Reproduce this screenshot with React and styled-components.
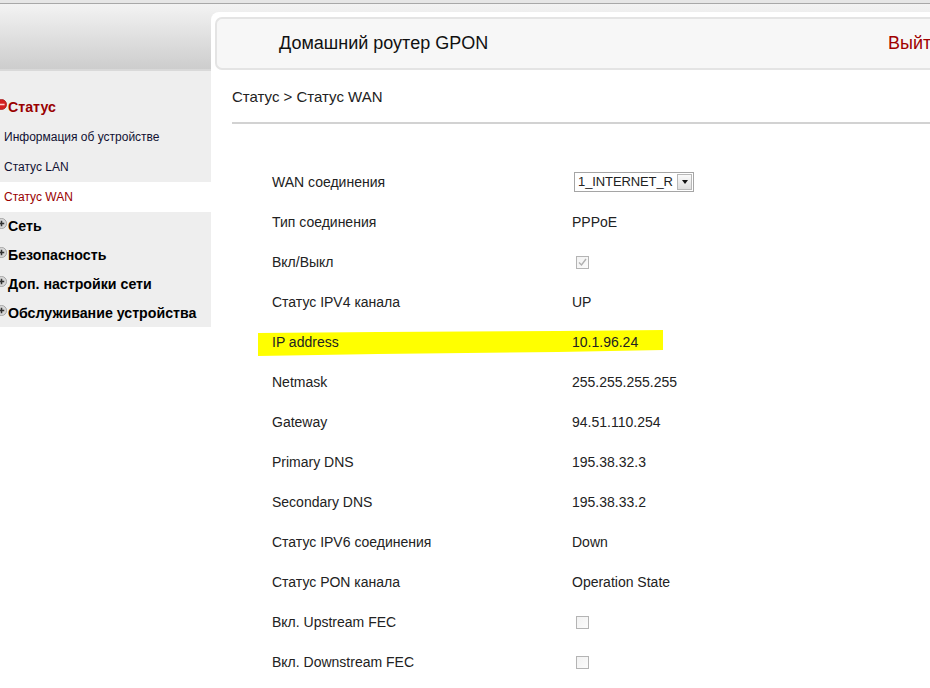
import React from 'react';
import styled, { createGlobalStyle } from 'styled-components';

const GlobalStyle = createGlobalStyle`
  html, body {
    margin: 0;
    padding: 0;
    background: #ffffff;
  }
  body {
    font-family: 'Liberation Sans', Arial, sans-serif;
    color: #111;
  }
`;

const Page = styled.div`
  width: 930px;
  height: 688px;
  overflow: hidden;
  display: grid;
  grid-template-columns: 211px 1fr;
  border-top: 3px solid #e6e6e6;
  background:
    linear-gradient(#a8a8a8, #a8a8a8) 0 0 / 100% 1px no-repeat,
    linear-gradient(#f3f3f3, #cdcdcd) 0 1px / 100% 65px no-repeat,
    linear-gradient(#d9d9d9, #d9d9d9) 0 66px / 100% 2px no-repeat,
    #ffffff;
`;

const Sidebar = styled.nav`
  margin-top: 68px;
  align-self: start;
  background: #eeeeee;
  padding: 21px 0 0;
  height: 235px;
  display: flex;
  flex-direction: column;
`;

const Group = styled.div`
  display: flex;
  align-items: center;
  height: 29px;
  font-size: 14.2px;
  font-weight: bold;
  color: ${p => (p.active ? '#990000' : '#000')};
  &:first-child {
    height: 30px;
  }
`;

const Bullet = styled.svg`
  width: 11px;
  height: 11px;
  margin-left: -4px;
  margin-right: 1px;
  flex: none;
  margin-top: -4px;
`;

const SubItem = styled.div`
  display: flex;
  align-items: center;
  height: 30px;
  padding-left: 4px;
  font-size: 12px;
  background: ${p => (p.active ? '#ffffff' : 'transparent')};
  color: ${p => (p.active ? '#990000' : '#111133')};
`;

const Main = styled.main`
  margin-top: 9px;
  background: #ffffff;
  border-top-left-radius: 8px;
  padding: 5px 0 0 4px;
  display: flex;
  flex-direction: column;
`;

const Header = styled.header`
  height: 49px;
  background: #f7f7f7;
  border: 2px solid #e4e4e4;
  border-right: none;
  border-top-left-radius: 7px;
  border-bottom-left-radius: 7px;
  display: flex;
  align-items: center;
  justify-content: space-between;
  padding-left: 62px;
  margin-right: -40px;
`;

const Title = styled.h1`
  margin: 0;
  font-size: 18px;
  font-weight: normal;
  color: #111;
`;

const Logout = styled.a`
  font-size: 18px;
  color: #a00000;
  width: 82px;
  white-space: nowrap;
`;

const Crumbs = styled.div`
  margin-left: 17px;
  padding-top: 18px;
  height: 34px;
  font-size: 15px;
  color: #222;
  border-bottom: 2px solid #d2d2d2;
`;

const Table = styled.div`
  padding: 38px 0 0 57px;
  display: flex;
  flex-direction: column;
`;

const Row = styled.div`
  position: relative;
  display: grid;
  grid-template-columns: 300px 1fr;
  align-items: center;
  height: 40px;
  font-size: 14px;
  color: #222;
`;

const Cell = styled.span`
  position: relative;
  z-index: 1;
`;

const Marker = styled.svg`
  position: absolute;
  left: -14px;
  top: 8px;
  width: 405px;
  height: 26px;
`;

const Select = styled.div`
  position: relative;
  z-index: 1;
  display: flex;
  width: 118px;
  height: 18px;
  margin-left: 2px;
  border: 1px solid #a5a5a5;
  font-size: 13px;
  background: #fff;
`;

const SelectText = styled.span`
  flex: 1;
  padding-left: 3px;
  line-height: 18px;
  overflow: hidden;
  white-space: nowrap;
  letter-spacing: -0.1px;
`;

const SelectButton = styled.span`
  flex: none;
  width: 15px;
  height: 16px;
  margin: 1px;
  border: 1px solid #b8b8b8;
  box-sizing: border-box;
  background: linear-gradient(#fafafa, #dedede);
  display: flex;
  align-items: center;
  justify-content: center;
  &::after {
    content: '';
    border-left: 3.5px solid transparent;
    border-right: 3.5px solid transparent;
    border-top: 4px solid #111;
  }
`;

const Check = styled.span`
  position: relative;
  z-index: 1;
  display: flex;
  align-items: center;
  justify-content: center;
  width: 11px;
  height: 11px;
  margin-left: 4px;
  border: 1px solid #b4b4b4;
  background: linear-gradient(135deg, #f2f2f2, #fbfbfb);
`;

const RedBullet = () => (
  <Bullet viewBox="0 0 10 10">
    <circle cx="5" cy="5" r="4.6" fill="#d42020" stroke="#9a0000" strokeWidth="0.6" />
    <rect x="2.2" y="4.3" width="5.6" height="1.4" fill="#ffd0d0" />
  </Bullet>
);

const GrayBullet = () => (
  <Bullet viewBox="0 0 10 10">
    <circle cx="5" cy="5" r="4.6" fill="#d8d8d8" stroke="#8a8a8a" strokeWidth="0.6" />
    <rect x="2.5" y="4.3" width="5" height="1.4" fill="#333" />
    <rect x="4.3" y="2.5" width="1.4" height="5" fill="#333" />
  </Bullet>
);

const rows = [
  ['WAN соединения', 'select'],
  ['Тип соединения', 'PPPoE'],
  ['Вкл/Выкл', 'checked'],
  ['Статус IPV4 канала', 'UP'],
  ['IP address', '10.1.96.24', true],
  ['Netmask', '255.255.255.255'],
  ['Gateway', '94.51.110.254'],
  ['Primary DNS', '195.38.32.3'],
  ['Secondary DNS', '195.38.33.2'],
  ['Статус IPV6 соединения', 'Down'],
  ['Статус PON канала', 'Operation State'],
  ['Вкл. Upstream FEC', 'unchecked'],
  ['Вкл. Downstream FEC', 'unchecked'],
];

const renderValue = value => {
  if (value === 'select') {
    return (
      <Select>
        <SelectText>1_INTERNET_R</SelectText>
        <SelectButton />
      </Select>
    );
  }
  if (value === 'checked') {
    return (
      <Check>
        <svg width="9" height="9" viewBox="0 0 9 9">
          <path d="M1 4.5 L3.5 7 L8 1" fill="none" stroke="#b0b0b0" strokeWidth="1.4" />
        </svg>
      </Check>
    );
  }
  if (value === 'unchecked') return <Check />;
  return <Cell>{value}</Cell>;
};

export default function App() {
  return (
    <>
      <GlobalStyle />
      <Page>
        <Sidebar>
          <Group active>
            <RedBullet />
            Статус
          </Group>
          <SubItem>Информация об устройстве</SubItem>
          <SubItem>Статус LAN</SubItem>
          <SubItem active>Статус WAN</SubItem>
          <Group>
            <GrayBullet />
            Сеть
          </Group>
          <Group>
            <GrayBullet />
            Безопасность
          </Group>
          <Group>
            <GrayBullet />
            Доп. настройки сети
          </Group>
          <Group>
            <GrayBullet />
            Обслуживание устройства
          </Group>
        </Sidebar>
        <Main>
          <Header>
            <Title>Домашний роутер GPON</Title>
            <Logout>Выйти</Logout>
          </Header>
          <Crumbs>Статус &gt; Статус WAN</Crumbs>
          <Table>
            {rows.map(([label, value, mark]) => (
              <Row key={label}>
                {mark && (
                  <Marker viewBox="0 0 405 26" preserveAspectRatio="none">
                    <polygon points="0,3 120,2 300,1 405,0 405,20 300,22 120,24 0,26" fill="#ffff00" />
                  </Marker>
                )}
                <Cell>{label}</Cell>
                {renderValue(value)}
              </Row>
            ))}
          </Table>
        </Main>
      </Page>
    </>
  );
}
